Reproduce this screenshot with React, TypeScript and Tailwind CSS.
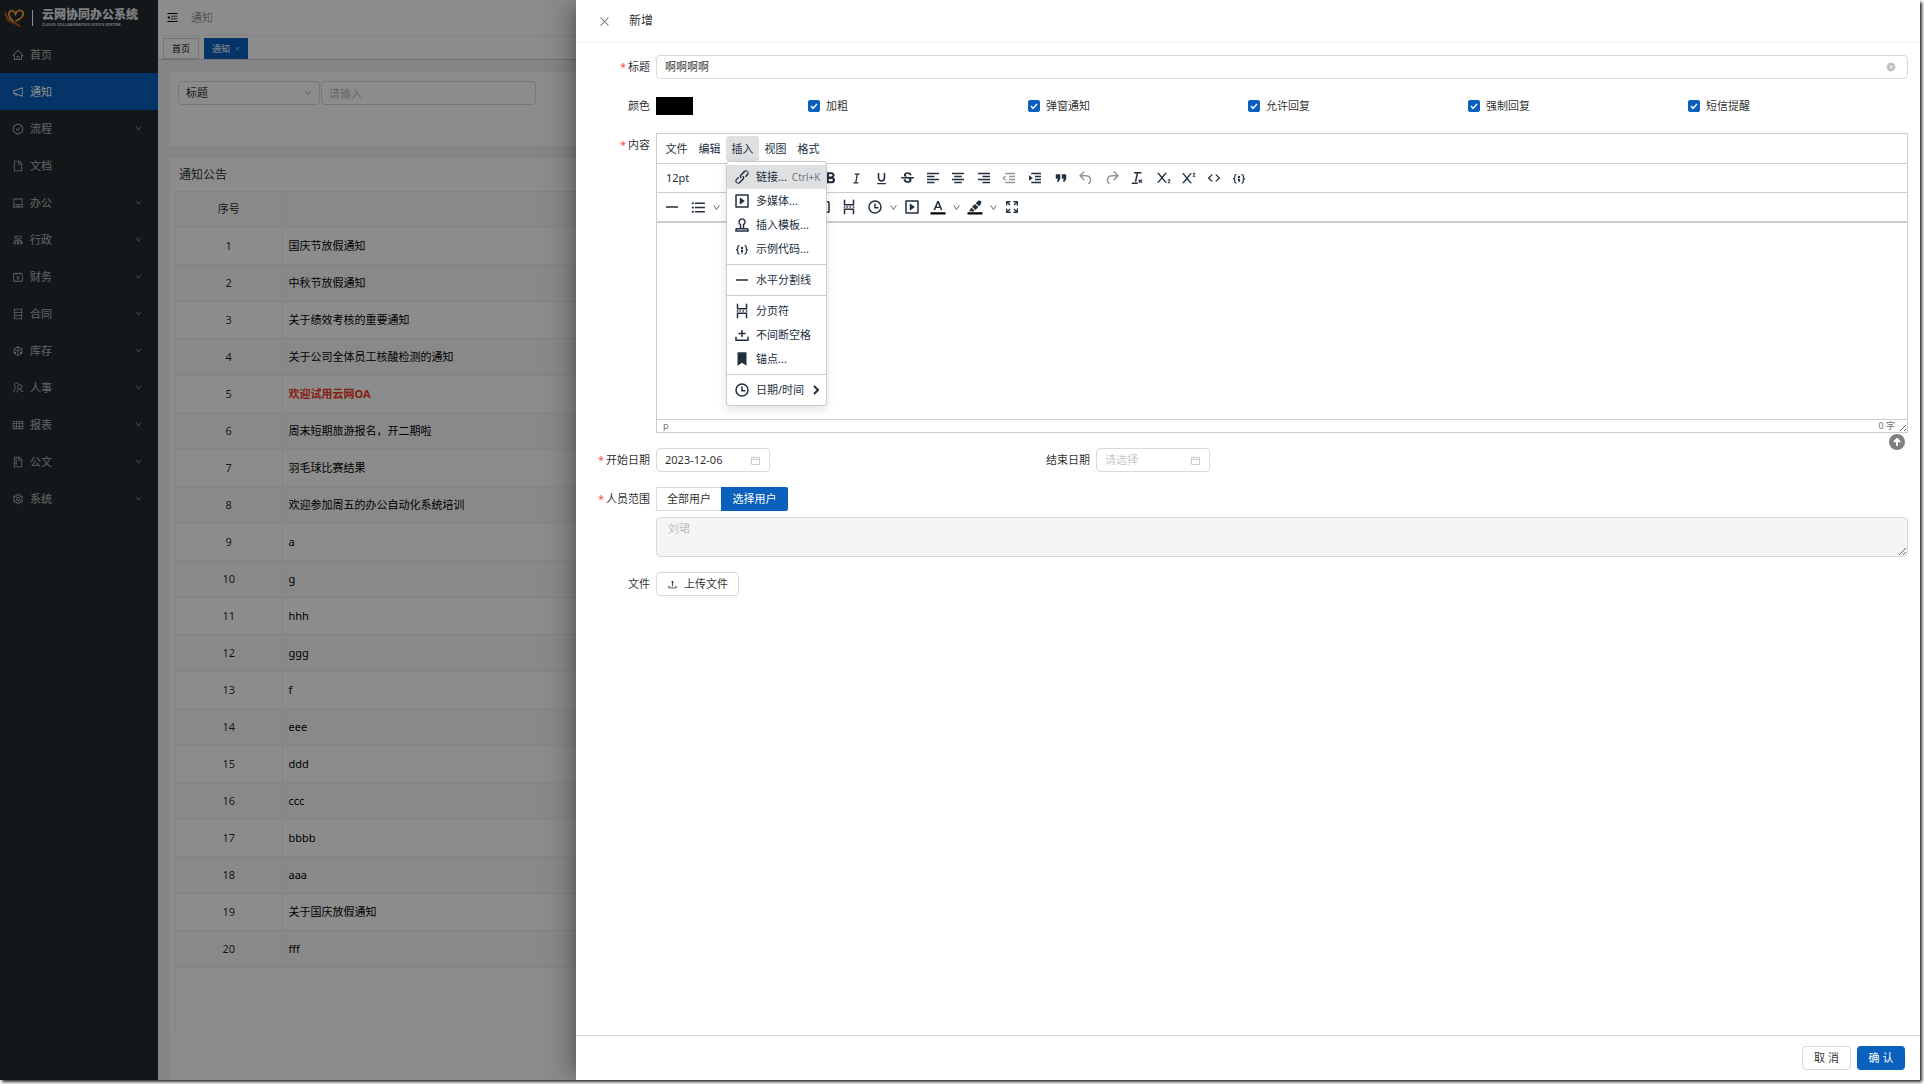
import { FC, ReactNode } from "react";
import { IconType } from "react-icons";
import {
  AiFillCloseCircle,
  AiOutlineAccountBook,
  AiOutlineCalendar,
  AiOutlineCheckCircle,
  AiOutlineClose,
  AiOutlineCluster,
  AiOutlineCodeSandbox,
  AiOutlineDatabase,
  AiOutlineDown,
  AiOutlineFile,
  AiOutlineFileZip,
  AiOutlineHome,
  AiOutlineLaptop,
  AiOutlineMenuFold,
  AiOutlineNotification,
  AiOutlineSetting,
  AiOutlineTable,
  AiOutlineUpload,
} from "react-icons/ai";
import {
  MdFormatBold,
  MdFormatListBulleted,
  MdFormatUnderlined,
  MdStrikethroughS,
} from "react-icons/md";
import { RiItalic, RiSubscript, RiSuperscript } from "react-icons/ri";

const paths = {
  alignLeft: "M4 5h16v2H4zM4 9h10v2H4zM4 13h16v2H4zM4 17h10v2H4z",
  alignCenter: "M4 5h16v2H4zM7 9h10v2H7zM4 13h16v2H4zM7 17h10v2H7z",
  alignRight: "M4 5h16v2H4zM10 9h10v2H10zM4 13h16v2H4zM10 17h10v2H10z",
  outdent:
    "M7 5h13v2H7zM12 9h8v2h-8zM12 13h8v2h-8zM7 17h13v2H7zM7 8.500l1.200 1L5.500 12l2.700 2.500-1.200 1L3 12z",
  indent:
    "M7 5h13v2H7zM12 9h8v2h-8zM12 13h8v2h-8zM7 17h13v2H7zM4 8.200l5 3.800-5 3.800z",
  quote:
    "M7.5 17h.9c.4 0 .7-.2.9-.6L11 13V8c0-.6-.4-1-1-1H6a1 1 0 00-1 1v4c0 .6.4 1 1 1h2l-1.300 2.700a1 1 0 00.8 1.300zm8 0h.9c.4 0 .7-.2.9-.6L19 13V8c0-.6-.4-1-1-1h-4a1 1 0 00-1 1v4c0 .6.4 1 1 1h2l-1.300 2.700a1 1 0 00.8 1.300z",
  undo: "M6.4 8H12c3.700 0 6.200 2 6.800 5.100.6 2.700-.4 5.600-2.300 6.800a1 1 0 01-1-1.800c1.100-.6 1.800-2.700 1.400-4.600-.5-2.100-2.100-3.500-4.900-3.500H6.400l3.300 3.300a1 1 0 11-1.400 1.400l-5-5a1 1 0 010-1.400l5-5a1 1 0 011.400 1.400L6.400 8z",
  redo: "M17.6 10H12c-2.800 0-4.400 1.400-4.900 3.500-.4 2 .3 4 1.400 4.600a1 1 0 11-1 1.800c-2-1.200-2.900-4.100-2.300-6.800.6-3 3-5.100 6.800-5.100h5.600l-3.300-3.300a1 1 0 111.400-1.400l5 5a1 1 0 010 1.400l-5 5a1 1 0 01-1.400-1.400l3.300-3.300z",
  link: "M6.2 12.3a1 1 0 011.4 1.4l-2.1 2a2 2 0 102.7 2.8l4.8-4.8a1 1 0 000-1.400 1 1 0 111.400-1.300 2.900 2.900 0 010 4L9.600 20a3.900 3.900 0 01-5.500-5.500l2-2zm11.600-.6a1 1 0 01-1.400-1.400l2-2a2 2 0 10-2.600-2.800L11 10.300a1 1 0 000 1.400A1 1 0 119.600 13a2.900 2.900 0 010-4L14.400 4a3.900 3.900 0 015.500 5.500l-2 2z",
  embed:
    "M4 3h16c.6 0 1 .4 1 1v16c0 .6-.4 1-1 1H4a1 1 0 01-1-1V4c0-.6.4-1 1-1zm1 2v14h14V5H5zm4.800 2.600l5.600 4a.5.5 0 010 .8l-5.600 4A.5.5 0 019 16V8a.5.5 0 01.8-.4z",
  template:
    "M19 19v-1H5v1h14zM9 16v-4a5 5 0 116 0v4h4a2 2 0 012 2v3H3v-3c0-1.100.9-2 2-2h4zm4 0v-5l.8-.6a3 3 0 10-3.600 0l.8.6v5h2z",
  codeSample:
    "M7.1 11a2.8 2.8 0 01-.8 2 2.8 2.8 0 01.8 2v1.700c0 .3.1.6.4.8.2.3.5.4.8.4.3 0 .4.2.4.4v.8c0 .2-.1.4-.4.4-.7 0-1.400-.3-2-.8-.5-.6-.8-1.300-.8-2V15c0-.3-.1-.6-.4-.8-.2-.3-.5-.4-.8-.4a.4.4 0 01-.4-.4v-.8c0-.2.2-.4.4-.4.3 0 .6-.1.8-.4.3-.2.4-.5.4-.8V9.300c0-.7.3-1.400.8-2 .6-.5 1.300-.8 2-.8.3 0 .4.2.4.4v.8c0 .2-.1.4-.4.4-.3 0-.6.1-.8.4-.3.2-.4.5-.4.8V11zm9.800 0V9.300c0-.3-.1-.6-.4-.8-.2-.3-.5-.4-.8-.4a.4.4 0 01-.4-.4V7c0-.2.1-.4.4-.4.7 0 1.400.3 2 .8.5.6.8 1.300.8 2V11c0 .3.1.6.4.8.2.3.5.4.8.4.2 0 .4.2.4.4v.8c0 .2-.2.4-.4.4-.3 0-.6.1-.8.4-.3.2-.4.5-.4.8v1.700c0 .7-.3 1.400-.8 2-.6.5-1.300.8-2 .8a.4.4 0 01-.4-.4v-.8c0-.2.1-.4.4-.4.3 0 .6-.1.8-.4.3-.2.4-.5.4-.8V15a2.800 2.800 0 01.8-2 2.800 2.800 0 01-.8-2zM12 9a1.600 1.600 0 110 3.200A1.600 1.600 0 0112 9zm0 4c1 0 1.600.7 1.600 1.600 0 1.900-1 3.300-2.700 3.400v-1.200c.8 0 1.200-.3 1.500-.8-1 0-1.900-.4-1.900-1.500 0-.9.6-1.500 1.500-1.500z",
  rule: "M4 11h16v2H4z",
  pageBreak:
    "M5 11h2v2H5zM8.500 11h2v2h-2zM12.500 11h2v2h-2zM17 11h2v2h-2zM7 3v5h10V3c0-.6.4-1 1-1s1 .4 1 1v7H5V3c0-.6.4-1 1-1s1 .4 1 1zm0 18a1 1 0 01-2 0v-7h14v7c0 .6-.4 1-1 1a1 1 0 01-1-1v-5H7v5z",
  nonBreaking:
    "M11 11H8a1 1 0 110-2h3V6c0-.6.4-1 1-1s1 .4 1 1v3h3c.6 0 1 .4 1 1s-.4 1-1 1h-3v3c0 .6-.4 1-1 1a1 1 0 01-1-1v-3zm10 4v5H3v-5c0-.6.4-1 1-1s1 .4 1 1v3h14v-3c0-.6.4-1 1-1s1 .4 1 1z",
  bookmark: "M6 4v17l6-4 6 4V4c0-.6-.4-1-1-1H7a1 1 0 00-1 1z",
  clock:
    "M12 19a7 7 0 100-14 7 7 0 000 14zm0 2a9 9 0 110-18 9 9 0 010 18zM16 12h-3V8c0-.6-.4-1-1-1a1 1 0 00-1 1v6h5c.6 0 1-.4 1-1s-.4-1-1-1z",
  source:
    "M9.8 15.700c.3.3.3.8 0 1-.3.4-.9.4-1.200 0l-4.400-4.100a.8.8 0 010-1.200l4.400-4.200c.3-.3.9-.3 1.200 0 .3.3.3.8 0 1.100L6 12l3.800 3.700zM14.200 15.700c-.3.3-.3.8 0 1 .4.4.9.4 1.200 0l4.400-4.100c.3-.3.3-.9 0-1.200l-4.400-4.200a.8.8 0 00-1.200 0c-.3.3-.3.8 0 1.100L18 12l-3.800 3.700z",
  clearFormat:
    "M8 4h10v2h-4.300L11 17H8.900L11.600 6H8zM5 18h8v2H5zM15 13.500l1.500 1.600 1.500-1.600 1.200 1.200-1.600 1.500 1.600 1.600-1.200 1.200-1.500-1.600-1.500 1.600-1.200-1.200 1.600-1.600-1.600-1.500z",
  table:
    "M5 4h14a2 2 0 012 2v12a2 2 0 01-2 2H5a2 2 0 01-2-2V6c0-1.100.9-2 2-2zm0 2v12h14V6z",
  fullscreen:
    "M15.3 10l-1.200-1.300 2.900-3h-2.300a.9.9 0 110-1.700H19c.5 0 .9.4.9.9v4.400a.9.9 0 11-1.800 0V7l-2.900 3zm0 4l3 3v-2.300a.9.9 0 111.700 0V19c0 .5-.4.9-.9.9h-4.400a.9.9 0 110-1.800H17l-3-2.900 1.300-1.200zM10 15.400l-2.900 3h2.300a.9.9 0 110 1.700H5a.9.9 0 01-.9-.9v-4.400a.9.9 0 111.800 0V17l2.900-3 1.200 1.300zM8.700 10L5.700 7v2.300a.9.9 0 01-1.700 0V5c0-.5.4-.9.9-.9h4.400a.9.9 0 010 1.800H7l3 2.900L8.700 10z",
  fontColor:
    "M11 4h2.200l4.800 12h-2.300l-1-2.700H9.300L8.300 16H6zM12 6.600l-1.900 5h3.900z",
  marker:
    "M7 12.500l4.500 4-1 1c-1.500.5-3 .5-4.500.2L4 18l2-3.500zM12 8l4.500 4-3.800 4-4.700-4.200zM15 4.500c1.500-1.500 3.500-1.500 4.700-.4 1.200 1.200 1 3-.3 4.400L17.500 11 13 7z",
};

type PathName = keyof typeof paths;

const EditorIcon: FC<{ name: PathName }> = ({ name }) => (
  <svg
    width={18}
    height={18}
    viewBox="0 0 24 24"
    fill="currentColor"
    className="shrink-0"
  >
    <path d={paths[name]} fillRule="evenodd" />
    {(name === "fontColor" || name === "marker") && (
      <path d="M2 19h20v3H2z" fill="#000" />
    )}
  </svg>
);

const StaffIcon: IconType = ({ size }) => (
  <svg
    width={size}
    height={size}
    viewBox="0 0 16 16"
    fill="none"
    stroke="currentColor"
    strokeWidth="1.2"
  >
    <circle cx="10.500" cy="6.500" r="3" />
    <path d="M8.500 2.500C6.500.5 3 2 3.500 5c.2 1.500 1 2 1.500 2.500L1 14M8.500 9L6 14M11 9.500l1.500 3H15" />
  </svg>
);

const menus: { label: string; icon: IconType; leaf?: boolean }[] = [
  { label: "首页", icon: AiOutlineHome, leaf: true },
  { label: "通知", icon: AiOutlineNotification, leaf: true },
  { label: "流程", icon: AiOutlineCheckCircle },
  { label: "文档", icon: AiOutlineFile, leaf: true },
  { label: "办公", icon: AiOutlineLaptop },
  { label: "行政", icon: AiOutlineCluster },
  { label: "财务", icon: AiOutlineAccountBook },
  { label: "合同", icon: AiOutlineDatabase },
  { label: "库存", icon: AiOutlineCodeSandbox },
  { label: "人事", icon: StaffIcon },
  { label: "报表", icon: AiOutlineTable },
  { label: "公文", icon: AiOutlineFileZip },
  { label: "系统", icon: AiOutlineSetting },
];

const notices = [
  "国庆节放假通知",
  "中秋节放假通知",
  "关于绩效考核的重要通知",
  "关于公司全体员工核酸检测的通知",
  "欢迎试用云网OA",
  "周末短期旅游报名，开二期啦",
  "羽毛球比赛结果",
  "欢迎参加周五的办公自动化系统培训",
  "a",
  "g",
  "hhh",
  "ggg",
  "f",
  "eee",
  "ddd",
  "ccc",
  "bbbb",
  "aaa",
  "关于国庆放假通知",
  "fff",
];

const options = ["加粗", "弹窗通知", "允许回复", "强制回复", "短信提醒"];

const insertMenu: {
  label: string;
  icon: PathName;
  hint?: string;
  sub?: boolean;
}[][] = [
  [
    { label: "链接...", icon: "link", hint: "Ctrl+K" },
    { label: "多媒体...", icon: "embed" },
    { label: "插入模板...", icon: "template" },
    { label: "示例代码...", icon: "codeSample" },
  ],
  [{ label: "水平分割线", icon: "rule" }],
  [
    { label: "分页符", icon: "pageBreak" },
    { label: "不间断空格", icon: "nonBreaking" },
    { label: "锚点...", icon: "bookmark" },
  ],
  [{ label: "日期/时间", icon: "clock", sub: true }],
];

const formatTools: { name: string; icon: ReactNode; off?: boolean }[] = [
  { name: "粗体", icon: <MdFormatBold size={19} /> },
  { name: "斜体", icon: <RiItalic size={15} /> },
  { name: "下划线", icon: <MdFormatUnderlined size={15} /> },
  { name: "删除线", icon: <MdStrikethroughS size={17} /> },
  { name: "左对齐", icon: <EditorIcon name="alignLeft" /> },
  { name: "居中", icon: <EditorIcon name="alignCenter" /> },
  { name: "右对齐", icon: <EditorIcon name="alignRight" /> },
  { name: "减少缩进", icon: <EditorIcon name="outdent" />, off: true },
  { name: "增加缩进", icon: <EditorIcon name="indent" /> },
  { name: "引用", icon: <EditorIcon name="quote" /> },
  { name: "撤销", icon: <EditorIcon name="undo" />, off: true },
  { name: "重做", icon: <EditorIcon name="redo" />, off: true },
  { name: "清除格式", icon: <EditorIcon name="clearFormat" /> },
  { name: "下标", icon: <RiSubscript size={16} /> },
  { name: "上标", icon: <RiSuperscript size={16} /> },
  { name: "源代码", icon: <EditorIcon name="source" /> },
  { name: "代码示例", icon: <EditorIcon name="codeSample" /> },
];

const Logo = () => (
  <div className="flex items-center h-9 pl-1">
    <svg
      width="22"
      height="20"
      viewBox="0 0 22 20"
      fill="none"
      strokeLinecap="round"
    >
      <path d="M1.500 5C1 11 9 13 15.500 18" stroke="#d9652b" strokeWidth="1.600" />
      <path d="M3 12c3 2.500 7 3 10 5" stroke="#b8452b" strokeWidth="1.200" />
      <path
        d="M9 13C5 10 3.500 5 6.500 3c2-1.200 4.200.2 5 3C13 2.500 16 1.500 18.500 3.500c2.500 3.500-1.500 7.500-6.500 9.500"
        stroke="#f0a030"
        strokeWidth="1.800"
      />
    </svg>
    <span className="w-px h-4 ml-1.5 mr-[9px] bg-white" />
    <div className="flex flex-col whitespace-nowrap">
      <span className="text-[12px] leading-[14px] font-black text-gray-200">
        云网协同办公系统
      </span>
      <span className="text-[4px] leading-[6px] font-bold text-gray-300">
        CLOUD COLLABORATIVE OFFICE SYSTEM
      </span>
    </div>
  </div>
);

const Sidebar = () => (
  <aside className="w-[158px] shrink-0 bg-[#242b2f] text-white/65">
    <Logo />
    <nav>
      {menus.map(({ label, icon: Icon, leaf }) => (
        <a
          key={label}
          href="#"
          className={
            label === "通知"
              ? "flex items-center h-[37px] px-3 gap-1.5 bg-[#0960bd] text-white"
              : "flex items-center h-[37px] px-3 gap-1.5"
          }
        >
          <Icon size={12} />
          <span className="grow">{label}</span>
          {!leaf && <AiOutlineDown size={7} className="mr-1" />}
        </a>
      ))}
    </nav>
  </aside>
);

const NoticePage = () => (
  <main className="flex flex-col grow min-w-0 bg-[#f0f2f5]">
    <header className="flex items-center gap-3 h-9 px-2 bg-white border-b border-[#eee]">
      <AiOutlineMenuFold size={13} className="text-black" />
      <span className="text-black/45">通知</span>
    </header>
    <div className="flex items-end gap-[5px] h-6 px-[5px] bg-white border-b border-[#d0d3d9] text-[9px]">
      <a
        href="#"
        className="flex items-center h-[21px] px-2 border border-[#d9d9d9] text-black"
      >
        首页
      </a>
      <a
        href="#"
        className="flex items-center gap-[5px] h-[21px] px-2 bg-[#0960bd] text-white"
      >
        通知
        <AiOutlineClose size={5} />
      </a>
    </div>
    <section className="flex items-start gap-px h-[74px] m-3 mr-0 px-2 py-[9px] bg-white">
      <div className="grid w-[142px]">
        <select
          aria-label="查询字段"
          className="col-start-1 row-start-1 h-6 px-[7px] appearance-none border border-[#d9d9d9] rounded bg-white text-black/85"
        >
          <option>标题</option>
        </select>
        <AiOutlineDown
          size={8}
          className="col-start-1 row-start-1 self-center justify-self-end mr-2 text-black/40"
        />
      </div>
      <input
        aria-label="查询内容"
        placeholder="请输入"
        className="w-[215px] h-6 px-[7px] border border-[#d9d9d9] rounded placeholder:text-black/30"
      />
    </section>
    <section className="grow ml-3 pl-[5px] bg-white">
      <h2 className="flex items-center px-1 h-[33px] text-[12px] leading-4 text-black/85">
        通知公告
      </h2>
      <div className="h-[844px] border-l border-t border-[#eee]">
        <table className="w-full table-fixed border-collapse text-black/85">
          <thead>
            <tr className="h-[35px] bg-[#fafafa] border-b border-[#eee]">
              <th className="w-[106px] font-normal border-r border-[#eee]">
                序号
              </th>
              <th />
            </tr>
          </thead>
          <tbody>
            {notices.map((title, i) => (
              <tr
                key={title}
                className="h-[37px] border-b border-[#eee] even:bg-[#fafafa]"
              >
                <td className="text-center border-r border-[#eee]">{i + 1}</td>
                <td
                  className={
                    i === 4
                      ? "px-1.5 font-bold text-[#f5391d]"
                      : "px-1.5 text-black"
                  }
                >
                  {title}
                </td>
              </tr>
            ))}
          </tbody>
        </table>
      </div>
    </section>
  </main>
);

type RowProps = {
  label: string;
  id?: string;
  required?: boolean;
  children: ReactNode;
};

const Row: FC<RowProps> = ({ label, id, required, children }) => (
  <div className="flex gap-1.5">
    <label
      htmlFor={id}
      className="flex items-center justify-end gap-0.5 w-[62px] h-6 shrink-0 whitespace-nowrap"
    >
      {required && <span className="text-[#ff4d4f]">*</span>}
      {label}
    </label>
    {children}
  </div>
);

const ToolButton: FC<{ label: string; children: ReactNode }> = ({
  label,
  children,
}) => (
  <button
    type="button"
    aria-label={label}
    className="flex items-center justify-center w-[26px] h-6"
  >
    {children}
  </button>
);

const Caret = () => (
  <button
    type="button"
    aria-label="展开"
    className="flex items-center justify-center w-[11px] h-6 text-[#222f3e]/80"
  >
    <AiOutlineDown size={9} />
  </button>
);

const InsertMenu = () => (
  <div
    role="menu"
    className="absolute left-0 top-full z-10 w-[101px] bg-white border border-[#ccc] rounded-[3px] shadow-[0_3px_8px_rgba(34,47,62,0.15)] divide-y divide-[#ccc]"
  >
    {insertMenu.map((group, i) => (
      <div key={i} className="py-[3px]">
        {group.map(({ label, icon, hint, sub }) => (
          <button
            key={label}
            type="button"
            role="menuitem"
            className={
              hint
                ? "flex items-center gap-[5px] w-full h-6 px-1.5 whitespace-nowrap bg-[#dee0e2]"
                : "flex items-center gap-[5px] w-full h-6 px-1.5 whitespace-nowrap"
            }
          >
            <EditorIcon name={icon} />
            <span className="grow text-left">{label}</span>
            {hint && (
              <span className="text-[10px] text-[#222f3e]/60">{hint}</span>
            )}
            {sub && (
              <svg width="8" height="10" viewBox="0 0 8 10" fill="none">
                <path d="M2 1l4 4-4 4" stroke="#222f3e" strokeWidth="2" />
              </svg>
            )}
          </button>
        ))}
      </div>
    ))}
  </div>
);

const Editor = () => (
  <div className="flex flex-col grow h-[300px] border border-[#ccc] text-[#222f3e]">
    <div className="flex items-center h-[30px] px-[3px] border-b border-[#ccc]">
      {["文件", "编辑", "插入", "视图", "格式"].map((name) => (
        <div key={name} className="relative">
          <button
            type="button"
            className={
              name === "插入"
                ? "w-[33px] h-[25px] rounded-[3px] bg-[#dee0e2]"
                : "w-[33px] h-[25px]"
            }
          >
            {name}
          </button>
          {name === "插入" && <InsertMenu />}
        </div>
      ))}
    </div>
    <div className="flex items-center h-[29px] px-0.5 border-b border-[#ccc]">
      <select
        aria-label="字号"
        className="w-[159px] h-6 pl-[7px] appearance-none bg-transparent"
      >
        <option>12pt</option>
      </select>
      <div className="grid grid-cols-17 w-[434px]">
        {formatTools.map(({ name, icon, off }) => (
          <button
            key={name}
            type="button"
            aria-label={name}
            disabled={off}
            className="flex items-center justify-center h-6 disabled:opacity-50"
          >
            {icon}
          </button>
        ))}
      </div>
    </div>
    <div className="flex items-center h-[30px] px-0.5 border-b-2 border-[#ccc]">
      <div className="flex w-[151px]">
        <ToolButton label="水平线">
          <EditorIcon name="rule" />
        </ToolButton>
        <ToolButton label="项目符号">
          <MdFormatListBulleted size={17} />
        </ToolButton>
        <Caret />
      </div>
      <ToolButton label="表格">
        <EditorIcon name="table" />
      </ToolButton>
      <ToolButton label="分页符">
        <EditorIcon name="pageBreak" />
      </ToolButton>
      <ToolButton label="时间">
        <EditorIcon name="clock" />
      </ToolButton>
      <Caret />
      <ToolButton label="多媒体">
        <EditorIcon name="embed" />
      </ToolButton>
      <ToolButton label="文字颜色">
        <EditorIcon name="fontColor" />
      </ToolButton>
      <Caret />
      <ToolButton label="背景颜色">
        <EditorIcon name="marker" />
      </ToolButton>
      <Caret />
      <ToolButton label="全屏">
        <EditorIcon name="fullscreen" />
      </ToolButton>
    </div>
    <textarea id="content" className="grow resize-none outline-none" />
    <div className="flex items-center h-[13px] pl-1.5 border-t border-[#ccc] text-[9px] text-[#222f3e]/70">
      <span className="grow">p</span>
      <span>0 字</span>
      <svg width="12" height="12" viewBox="0 0 12 12" stroke="currentColor">
        <path d="M5 11l6-6M9 11l2-2" />
      </svg>
    </div>
  </div>
);

const DateField: FC<{ id: string; value?: string }> = ({ id, value }) => (
  <div className="flex items-center w-[114px] h-6 px-2 border border-[#d9d9d9] rounded">
    <input
      id={id}
      defaultValue={value}
      placeholder="请选择"
      className="w-full min-w-0 outline-none placeholder:text-black/25"
    />
    <AiOutlineCalendar size={11} className="shrink-0 text-black/25" />
  </div>
);

const Drawer = () => (
  <div
    role="dialog"
    aria-label="新增"
    className="absolute inset-y-0 right-0 flex flex-col w-[70%] bg-white text-black/85 shadow-[-6px_0_16px_-8px_rgba(0,0,0,0.32),-9px_0_28px_rgba(0,0,0,0.2)]"
  >
    <header className="flex items-center gap-[18px] h-[43px] shrink-0 px-[22px] border-b border-[#f0f0f0]">
      <button type="button" aria-label="关闭" className="text-black/50">
        <AiOutlineClose size={13} />
      </button>
      <h1 className="text-[12px]">新增</h1>
    </header>
    <form className="flex flex-col gap-[15px] grow p-3">
      <Row label="标题" id="title" required>
        <div className="flex items-center grow h-6 px-2 border border-[#d9d9d9] rounded">
          <input
            id="title"
            defaultValue="啊啊啊啊"
            className="grow outline-none"
          />
          <button
            type="button"
            aria-label="清空"
            className="mr-[3px] text-black/25"
          >
            <AiFillCloseCircle size={10} />
          </button>
        </div>
      </Row>
      <div className="grid grid-cols-6">
        <Row label="颜色" id="color">
          <button
            id="color"
            type="button"
            aria-label="选择颜色"
            className="w-[37px] h-[18px] self-center bg-black"
          />
        </Row>
        {options.map((name) => (
          <label key={name} className="flex items-center gap-1.5 h-6">
            <span className="grid">
              <input
                type="checkbox"
                defaultChecked
                className="col-start-1 row-start-1 size-3 appearance-none rounded-[2px] border border-[#d9d9d9] checked:border-[#0960bd] checked:bg-[#0960bd]"
              />
              <svg
                viewBox="0 0 12 12"
                className="col-start-1 row-start-1 size-3 pointer-events-none"
                fill="none"
              >
                <path
                  d="M3 6l2 2.500 4-4.500"
                  stroke="#fff"
                  strokeWidth="1.400"
                />
              </svg>
            </span>
            {name}
          </label>
        ))}
      </div>
      <Row label="内容" id="content" required>
        <Editor />
      </Row>
      <div className="grid grid-cols-3">
        <Row label="开始日期" id="start" required>
          <DateField id="start" value="2023-12-06" />
        </Row>
        <Row label="结束日期" id="end">
          <DateField id="end" />
        </Row>
      </div>
      <Row label="人员范围" id="range" required>
        <div className="flex flex-col grow gap-1.5">
          <div className="flex">
            <label className="relative flex items-center justify-center w-[65px] h-6 border border-r-0 border-[#d9d9d9] rounded-l-[2px]">
              <input type="radio" name="range" className="sr-only" />
              全部用户
            </label>
            <label className="relative flex items-center justify-center w-[67px] h-6 rounded-r-[2px] bg-[#0960bd] text-white">
              <input
                id="range"
                type="radio"
                name="range"
                defaultChecked
                className="sr-only"
              />
              选择用户
            </label>
          </div>
          <textarea
            aria-label="已选用户"
            disabled
            defaultValue="刘珺"
            className="h-10 px-[11px] py-[3px] leading-4 resize border border-[#d9d9d9] rounded bg-[#f5f5f5] text-black/25"
          />
        </div>
      </Row>
      <Row label="文件" id="upload">
        <button
          id="upload"
          type="button"
          className="flex items-center justify-center gap-1.5 w-[83px] h-6 border border-[#d9d9d9] rounded shadow-[0_2px_0_rgba(0,0,0,0.02)]"
        >
          <AiOutlineUpload size={11} />
          上传文件
        </button>
      </Row>
    </form>
    <footer className="flex items-center justify-end gap-1.5 h-[45px] shrink-0 px-[15px] border-t border-[#d9d9d9]">
      <button
        type="button"
        className="w-[49px] h-6 border border-[#d9d9d9] rounded"
      >
        取 消
      </button>
      <button
        type="button"
        className="w-12 h-6 rounded bg-[#0960bd] text-white"
      >
        确 认
      </button>
    </footer>
    <button
      type="button"
      aria-label="回到顶部"
      className="absolute right-[15px] top-[434px] flex items-center justify-center size-4 rounded-full bg-[#808080]"
    >
      <svg width="8" height="8" viewBox="0 0 8 8" fill="none">
        <path d="M4 8V2M1 4l3-3 3 3" stroke="#fff" strokeWidth="2" />
      </svg>
    </button>
  </div>
);

export default function App() {
  return (
    <div className="h-screen pr-1 pb-1 overflow-hidden bg-white text-[11px] leading-4 font-['Noto_Sans','Noto_Sans_CJK_SC',sans-serif]">
      <div className="relative h-full shadow-[2px_2px_3px_rgba(0,0,0,0.85)]">
        <div className="flex h-full overflow-hidden">
          <Sidebar />
          <NoticePage />
        </div>
        <div className="absolute inset-0 overflow-hidden">
          <div className="absolute inset-0 bg-black/45" />
          <Drawer />
        </div>
      </div>
    </div>
  );
}
